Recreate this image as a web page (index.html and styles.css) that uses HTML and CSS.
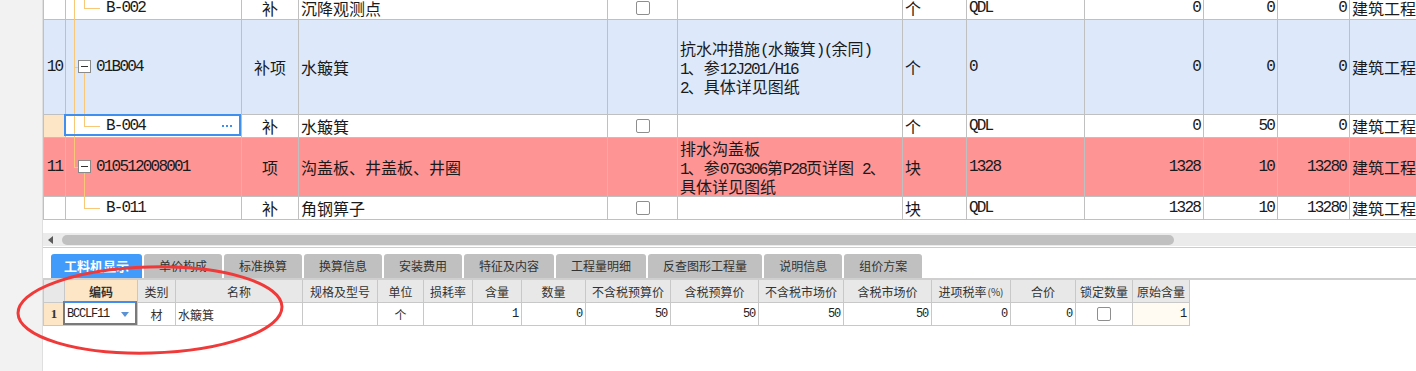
FILE: index.html
```html
<!DOCTYPE html>
<html lang="zh-CN">
<head>
<meta charset="utf-8">
<title>工料机显示</title>
<link rel="stylesheet" href="styles.css">
</head>
<body>
<div class="app">
  <aside class="strip"></aside>
  <main class="main">
    <section class="upper">
      <div class="top-grid">
        <div class="row first">
          <div class="c num"></div>
          <div class="c code child"><span class="tl v-out"></span><span class="tl v-in-top"></span><span class="tl h-in"></span><span class="m">B-002</span></div>
          <div class="c type">补</div>
          <div class="c name">沉降观测点</div>
          <div class="c chk"><span class="cb"></span></div>
          <div class="c feat"></div>
          <div class="c unit">个</div>
          <div class="c qdl m">QDL</div>
          <div class="c n m">0</div>
          <div class="c n m">0</div>
          <div class="c n m">0</div>
          <div class="c last">建筑工程</div>
        </div>
        <div class="row tall blue">
          <div class="c num m">10</div>
          <div class="c code parent"><span class="tl v-out"></span><span class="tl h-out"></span><span class="box"></span><span class="tl v-in-bot"></span><span class="m">01B004</span></div>
          <div class="c type">补项</div>
          <div class="c name">水簸箕</div>
          <div class="c chk"></div>
          <div class="c feat"><div class="lines"><div>抗水冲措施<span class="m">(</span>水簸箕<span class="m">)(</span>余同<span class="m">)</span></div><div><span class="m">1</span>、参<span class="m">12J201/H16</span></div><div><span class="m">2</span>、具体详见图纸</div></div></div>
          <div class="c unit">个</div>
          <div class="c qdl m">0</div>
          <div class="c n m">0</div>
          <div class="c n m">0</div>
          <div class="c n m">0</div>
          <div class="c last">建筑工程</div>
        </div>
        <div class="row">
          <div class="c num cur"></div>
          <div class="c code child selected"><span class="tl v-out"></span><span class="tl v-in-top"></span><span class="tl h-in"></span><span class="m">B-004</span><span class="more"><i></i><i></i><i></i></span></div>
          <div class="c type">补</div>
          <div class="c name">水簸箕</div>
          <div class="c chk"><span class="cb"></span></div>
          <div class="c feat"></div>
          <div class="c unit">个</div>
          <div class="c qdl m">QDL</div>
          <div class="c n m">0</div>
          <div class="c n m">50</div>
          <div class="c n m">0</div>
          <div class="c last">建筑工程</div>
        </div>
        <div class="row mid red">
          <div class="c num m">11</div>
          <div class="c code parent"><span class="tl v-out half"></span><span class="tl h-out"></span><span class="box"></span><span class="tl v-in-bot"></span><span class="m">010512008001</span></div>
          <div class="c type">项</div>
          <div class="c name">沟盖板、井盖板、井圈</div>
          <div class="c chk"></div>
          <div class="c feat"><div class="lines"><div>排水沟盖板</div><div><span class="m">1</span>、参<span class="m">07G306</span>第<span class="m">P28</span>页详图<span class="m"> 2</span>、</div><div>具体详见图纸</div></div></div>
          <div class="c unit">块</div>
          <div class="c qdl m">1328</div>
          <div class="c n m">1328</div>
          <div class="c n m">10</div>
          <div class="c n m">13280</div>
          <div class="c last">建筑工程</div>
        </div>
        <div class="row">
          <div class="c num"></div>
          <div class="c code child"><span class="tl v-in-top"></span><span class="tl h-in"></span><span class="m">B-011</span></div>
          <div class="c type">补</div>
          <div class="c name">角钢箅子</div>
          <div class="c chk"><span class="cb"></span></div>
          <div class="c feat"></div>
          <div class="c unit">块</div>
          <div class="c qdl m">QDL</div>
          <div class="c n m">1328</div>
          <div class="c n m">10</div>
          <div class="c n m">13280</div>
          <div class="c last">建筑工程</div>
        </div>
      </div>
    </section>
    <div class="hscroll"><span class="arrow"></span><span class="thumb"></span></div>
    <nav class="tabbar">
      <span class="tab active">工料机显示</span>
      <span class="tab">单价构成</span>
      <span class="tab">标准换算</span>
      <span class="tab">换算信息</span>
      <span class="tab">安装费用</span>
      <span class="tab">特征及内容</span>
      <span class="tab">工程量明细</span>
      <span class="tab">反查图形工程量</span>
      <span class="tab">说明信息</span>
      <span class="tab">组价方案</span>
    </nav>
    <section class="bgrid">
      <div class="brow head">
        <div class="b"></div>
        <div class="b key">编码</div>
        <div class="b">类别</div>
        <div class="b">名称</div>
        <div class="b">规格及型号</div>
        <div class="b">单位</div>
        <div class="b">损耗率</div>
        <div class="b">含量</div>
        <div class="b">数量</div>
        <div class="b">不含税预算价</div>
        <div class="b">含税预算价</div>
        <div class="b">不含税市场价</div>
        <div class="b">含税市场价</div>
        <div class="b">进项税率<span class="pct">(%)</span></div>
        <div class="b">合价</div>
        <div class="b">锁定数量</div>
        <div class="b">原始含量</div>
      </div>
      <div class="brow data">
        <div class="b rn">1</div>
        <div class="b bcode"><span class="m12">BCCLF11</span><span class="dd"></span></div>
        <div class="b">材</div>
        <div class="b left">水簸箕</div>
        <div class="b"></div>
        <div class="b">个</div>
        <div class="b"></div>
        <div class="b right m12">1</div>
        <div class="b right m12">0</div>
        <div class="b right m12">50</div>
        <div class="b right m12">50</div>
        <div class="b right m12">50</div>
        <div class="b right m12">50</div>
        <div class="b right m12">0</div>
        <div class="b right m12">0</div>
        <div class="b"><span class="cb"></span></div>
        <div class="b right m12 orig">1</div>
      </div>
    </section>
  </main>
</div>
<svg class="mark" viewBox="0 0 1416 371" xmlns="http://www.w3.org/2000/svg">
  <ellipse cx="150" cy="310" rx="132" ry="43" transform="rotate(-1.5 150 310)" fill="none" stroke="#f03a3a" stroke-width="3"/>
</svg>
</body>
</html>
```

FILE: styles.css
```css
* { box-sizing: border-box; margin: 0; padding: 0; }
html, body { width: 1416px; height: 371px; overflow: hidden; background: #fff; }
body { position: relative; font-family: "Noto Sans CJK SC", "Noto Sans", sans-serif; color: #1a1a1a; }

.app { display: flex; height: 371px; }
.strip { width: 43px; flex: none; background: #f2f2f2; border-right: 1px solid #dfdfdf; }
.main { flex: 1; min-width: 0; overflow: hidden; display: flex; flex-direction: column; }

/* upper grid */
.upper { height: 233px; flex: none; overflow: hidden; }
.top-grid { border-left: 1px solid #c0c0c0; font-size: 16px; line-height: 19px; }
.row {
  display: grid;
  grid-template-columns: 22px 176px 57px 309px 70px 225px 64px 118px 119px 74px 72px 200px;
  height: 23px;
}
.row.first { margin-top: -3px; }
.row.tall { height: 95px; }
.row.mid { height: 59px; }
.c {
  position: relative;
  display: flex;
  align-items: center;
  padding: 0 2px;
  border-right: 1px solid #c0c0c0;
  border-bottom: 1px solid #c0c0c0;
  white-space: nowrap;
  overflow: hidden;
  background: #fff;
}
.row.blue .c { background: #dde9fb; }
.row.red .c { background: #ff9494; }
.c.num { justify-content: center; padding: 0; }
.c.num.cur { background: #fde6c6; }
.c.type { justify-content: center; }
.c.chk { justify-content: center; }
.c.n { justify-content: flex-end; padding-right: 3px; }
.c.last { padding-left: 2px; }
.c.code { overflow: visible; }
.c.code.child { padding-left: 40px; }
.c.code.parent { padding-left: 30px; }

.m { font-family: "Liberation Mono", monospace; letter-spacing: -1.8px; }

.lines div { height: 19px; }

/* tree lines */
.tl { position: absolute; background: #f8c777; z-index: 1; }
.v-out { left: 8px; top: 0; bottom: -1px; width: 1px; }
.v-out.half { bottom: auto; height: 50%; }
.h-out { left: 8px; top: 50%; width: 4px; height: 1px; }
.v-in-top { left: 18px; top: 0; height: 50%; width: 1px; }
.h-in { left: 18px; top: 50%; width: 16px; height: 1px; }
.v-in-bot { left: 18px; top: calc(50% + 6px); bottom: -1px; width: 1px; }
.box {
  position: absolute; left: 12px; top: 50%; margin-top: -7px;
  width: 13px; height: 13px; border: 1px solid #8a8a8a; background: #fff; z-index: 2;
}
.box::before {
  content: ""; position: absolute; left: 2px; top: 5px; width: 7px; height: 1px; background: #333;
}
.c.code.selected::after {
  content: ""; position: absolute; top: -1px; left: -2px; right: 0; bottom: 1px;
  border: 2px solid #3f8ff0; z-index: 3;
}
.more { margin-left: auto; margin-right: 7px; display: flex; gap: 2px; }
.more i { display: block; width: 2px; height: 2px; background: #3f8ff0; }

.cb {
  display: inline-block; width: 14px; height: 14px;
  border: 1px solid #8e8e8e; border-radius: 2px; background: #fff;
}

/* horizontal scroll */
.hscroll { height: 13px; flex: none; background: #ebebeb; display: flex; align-items: center; }
.arrow {
  width: 0; height: 0; margin-left: 5px; margin-right: 9px;
  border-right: 5px solid #5a5a5a; border-top: 4px solid transparent; border-bottom: 4px solid transparent;
}
.thumb { width: 1112px; height: 10px; border-radius: 5px; background: #c0c0c0; }

/* tabs */
.tabbar {
  flex: none; display: flex; align-items: flex-end;
  margin-top: 1px; padding: 6px 0 0 8px;
  border-top: 1px solid #cdcdcd; border-bottom: 2px solid #cfcfcf;
}
.tab {
  height: 24px; line-height: 24px; padding: 0 15px; margin-right: 2px;
  background: #c0c0c0; color: #333; font-size: 12px; border-radius: 3px 3px 0 0; white-space: nowrap;
}
.tab.active { background: #419bfa; color: #fff; font-weight: bold; font-size: 13px; padding: 0 13px; }

/* bottom grid */
.bgrid { border-left: 1px solid #c8c8c8; font-size: 12px; color: #333; }
.brow {
  display: grid;
  grid-template-columns: 21px 73px 38px 127px 75px 46px 49px 49px 64px 85px 88px 85px 88px 79px 65px 57px 57px;
  height: 23px;
}
.b {
  position: relative; display: flex; align-items: center; justify-content: center;
  border-right: 1px solid #c8c8c8; border-bottom: 1px solid #c8c8c8;
  white-space: nowrap; overflow: visible; background: #fff;
}
.head .b { background: #e8e8e8; }
.head .b.key { background: #fde6c6; font-weight: bold; }
.pct { font-size: 10px; margin-left: 1px; }
.b.rn { background: #fde6c6; font-weight: bold; font-family: "Liberation Serif", serif; font-size: 13px; }
.b.left { justify-content: flex-start; padding-left: 2px; }
.b.right { justify-content: flex-end; padding-right: 3px; }
.b.orig { background: #fffaf2; }
.m12 { font-family: "Liberation Mono", monospace; font-size: 12px; letter-spacing: -1.2px; color: #222; }
.b.bcode { justify-content: flex-start; padding-left: 2px; }
.b.bcode::after {
  content: ""; position: absolute; top: -2px; left: -2px; right: 0; bottom: 0;
  border: 2px solid #7a7a7a; border-top-color: #3f8ff0;
}
.dd {
  margin-left: auto; margin-right: 8px; width: 0; height: 0;
  border-left: 4px solid transparent; border-right: 4px solid transparent; border-top: 5px solid #5b92d4;
}

.mark { position: absolute; left: 0; top: 0; width: 1416px; height: 371px; pointer-events: none; }
```
